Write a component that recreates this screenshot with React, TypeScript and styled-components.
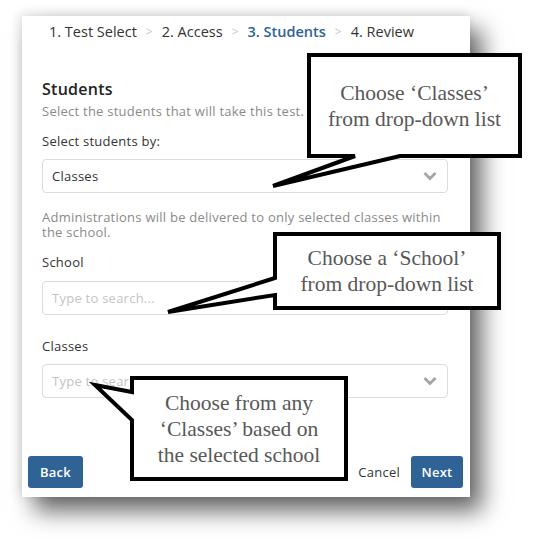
import React from "react";
import styled, { createGlobalStyle } from "styled-components";

const GlobalStyle = createGlobalStyle`
  html, body {
    margin: 0;
    padding: 0;
    background: #fff;
  }
  body {
    font-family: "Open Sans", "DejaVu Sans", sans-serif;
  }
`;

// 전체 화면
const Stage = styled.div`
  position: relative;
  width: 550px;
  height: 539px;
  padding: 16px 0 0 22px;
  box-sizing: border-box;
  overflow: hidden;
`;

const Card = styled.div`
  width: 448px;
  height: 481px;
  background: #fff;
  display: flex;
  flex-direction: column;
  box-shadow: 12px 14px 22px rgba(0, 0, 0, 0.6), -2px -2px 10px rgba(0, 0, 0, 0.12);
`;

// 상단 단계 표시
const Stepper = styled.div`
  height: 30px;
  display: flex;
  align-items: center;
  padding-left: 27px;
  gap: 7px;
`;

const Step = styled.span<{ $active?: boolean }>`
  font-size: 14.5px;
  color: ${(p) => (p.$active ? "#2f6396" : "#333")};
  font-weight: ${(p) => (p.$active ? 600 : 400)};
  white-space: nowrap;
`;

const StepArrow = styled.span`
  color: #c8c8c8;
  font-size: 12px;
  padding: 0 2px;
`;

const Body = styled.div`
  padding: 0 22px 0 20px;
  display: flex;
  flex-direction: column;
  letter-spacing: 0.25px;
`;

const Heading = styled.h2`
  margin: 33px 0 0;
  font-size: 16px;
  line-height: 20px;
  font-weight: 600;
  color: #222;
`;

const Hint = styled.p<{ $top: number }>`
  margin: ${(p) => p.$top}px 0 0;
  font-size: 13px;
  line-height: ${(p) => (p.$top > 5 ? 15 : 18)}px;
  color: #8a8a8a;
`;

const Label = styled.div<{ $top: number }>`
  margin-top: ${(p) => p.$top}px;
  font-size: 13px;
  line-height: 18px;
  color: #333;
`;

const Field = styled.div<{ $top: number }>`
  margin-top: ${(p) => p.$top}px;
  height: 34px;
  box-sizing: border-box;
  border: 1px solid #dcdcdc;
  border-radius: 4px;
  display: flex;
  align-items: center;
  justify-content: space-between;
  padding: 0 9px 0 9px;
`;

const FieldText = styled.span<{ $placeholder?: boolean }>`
  font-size: 13px;
  color: ${(p) => (p.$placeholder ? "#c4c4c4" : "#333")};
`;

const Footer = styled.div`
  margin-top: auto;
  display: flex;
  align-items: center;
  padding: 0 7px 9px 6px;
  letter-spacing: 0.25px;
`;

const Button = styled.button<{ $w: number }>`
  width: ${(p) => p.$w}px;
  height: 32px;
  border: none;
  border-radius: 3px;
  background: #2f6396;
  color: #fff;
  font-family: inherit;
  font-size: 13px;
  font-weight: 600;
  letter-spacing: inherit;
  cursor: pointer;
`;

const Cancel = styled.span`
  margin-left: auto;
  margin-right: 11px;
  font-size: 13px;
  color: #333;
`;

// 말풍선
const CalloutBox = styled.div<{ $x: number; $y: number; $w: number; $h: number }>`
  position: absolute;
  left: ${(p) => p.$x}px;
  top: ${(p) => p.$y}px;
  width: ${(p) => p.$w}px;
  height: ${(p) => p.$h}px;
  display: flex;
  align-items: center;
  justify-content: center;
`;

const CalloutShape = styled.svg`
  position: absolute;
  left: 0;
  top: 0;
  overflow: visible;
`;

const CalloutText = styled.div`
  position: relative;
  font-family: "Liberation Serif", "Times New Roman", serif;
  font-size: 21.5px;
  line-height: 26px;
  color: #585858;
  text-align: center;
`;

const Chevron = () => (
  <svg width="16" height="10" viewBox="0 0 16 10">
    <path d="M2.5 2 L8 7.5 L13.5 2" fill="none" stroke="#a5a5a5" strokeWidth="2.8" />
  </svg>
);

interface CalloutProps {
  x: number;
  y: number;
  w: number;
  h: number;
  path: string;
  lines: string[];
}

const Callout: React.FC<CalloutProps> = ({ x, y, w, h, path, lines }) => (
  <CalloutBox $x={x} $y={y} $w={w} $h={h}>
    <CalloutShape width={w} height={h}>
      <path d={path} fill="#fff" stroke="#000" strokeWidth="4" strokeLinejoin="miter" />
    </CalloutShape>
    <CalloutText>
      {lines.map((l) => (
        <div key={l}>{l}</div>
      ))}
    </CalloutText>
  </CalloutBox>
);

const App: React.FC = () => {
  return (
    <Stage>
      <GlobalStyle />
      <Card>
        <Stepper>
          <Step>1. Test Select</Step>
          <StepArrow>&gt;</StepArrow>
          <Step>2. Access</Step>
          <StepArrow>&gt;</StepArrow>
          <Step $active>3. Students</Step>
          <StepArrow>&gt;</StepArrow>
          <Step>4. Review</Step>
        </Stepper>
        <Body>
          <Heading>Students</Heading>
          <Hint $top={3}>Select the students that will take this test.</Hint>
          <Label $top={12}>Select students by:</Label>
          <Field $top={9}>
            <FieldText>Classes</FieldText>
            <Chevron />
          </Field>
          <Hint $top={17}>
            Administrations will be delivered to only selected classes within the school.
          </Hint>
          <Label $top={13}>School</Label>
          <Field $top={10}>
            <FieldText $placeholder>Type to search...</FieldText>
          </Field>
          <Label $top={22}>Classes</Label>
          <Field $top={9}>
            <FieldText $placeholder>Type to search...</FieldText>
            <Chevron />
          </Field>
        </Body>
        <Footer>
          <Button $w={55}>Back</Button>
          <Cancel>Cancel</Cancel>
          <Button $w={52}>Next</Button>
        </Footer>
      </Card>

      <Callout
        x={309}
        y={55}
        w={211}
        h={101}
        path="M0 0 H211 V101 H91 L-36 131 L46 101 H0 Z"
        lines={["Choose \u2018Classes\u2019", "from drop-down list"]}
      />
      <Callout
        x={275}
        y={234}
        w={224}
        h={74}
        path="M0 0 H224 V74 H0 V61 L-107 78 L0 44 Z"
        lines={["Choose a \u2018School\u2019", "from drop-down list"]}
      />
      <Callout
        x={132}
        y={378}
        w={214}
        h={101}
        path="M0 0 H214 V101 H0 V42 L-37 7 L0 14 Z"
        lines={["Choose from any", "\u2018Classes\u2019 based on", "the selected school"]}
      />
    </Stage>
  );
};

export default App;
